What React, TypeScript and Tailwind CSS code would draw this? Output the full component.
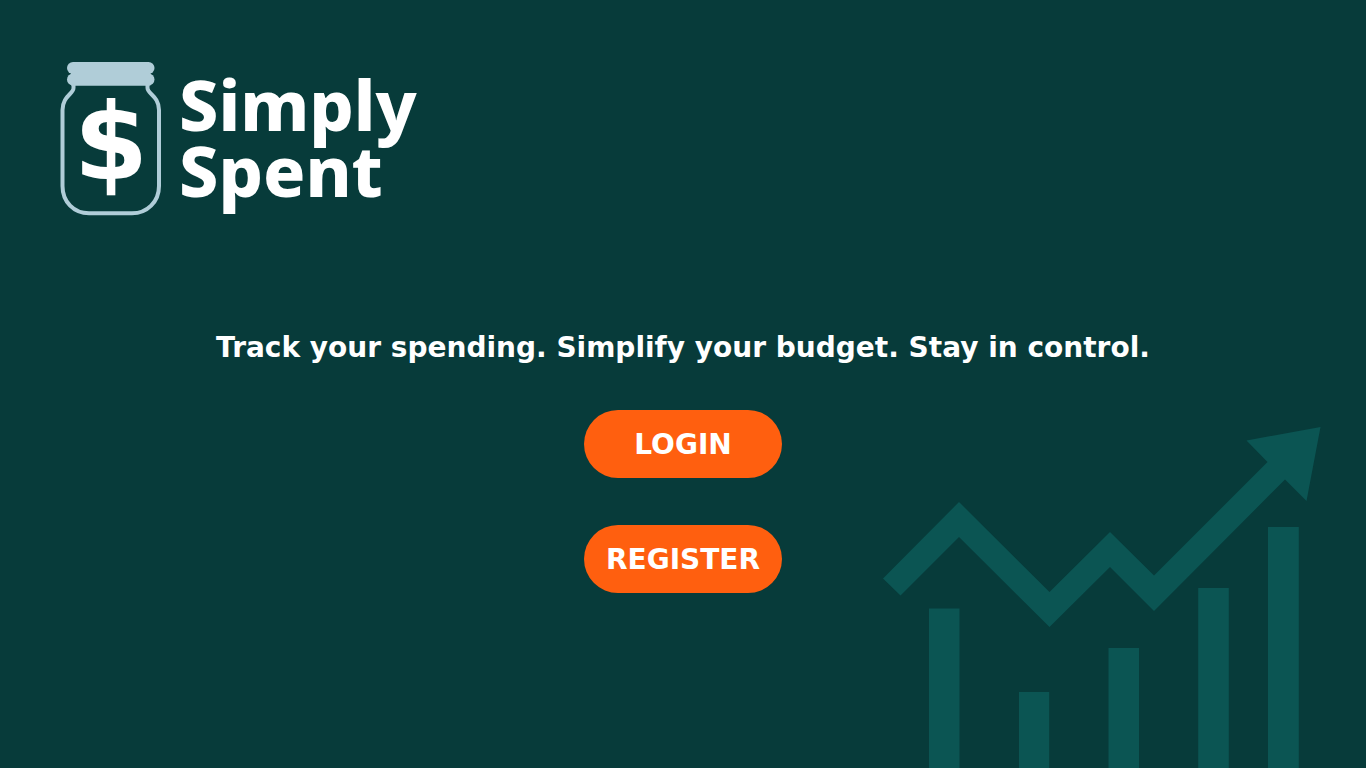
function JarLogo() {
  return (
    <svg viewBox="0 0 104 156" className="h-[156px] w-[104px] shrink-0" aria-hidden="true">
      <path
        d="M14.500 23V27C14.500 33 3.500 35 3.500 49V125C3.500 141 15 152.300 30 152.300H73C88 152.300 100 141 100 125V49C100 35 88.500 33 88.500 27V23"
        fill="none"
        stroke="#b0cdd8"
        strokeWidth="4"
      />
      <g fill="#b0cdd8">
        <rect x="8" y="1" width="87.500" height="12" rx="6" />
        <rect x="8" y="12.500" width="87.500" height="12" rx="6" />
        <rect x="12" y="8" width="79.500" height="9" />
        <rect x="12" y="18" width="79.500" height="6.500" />
      </g>
      <text
        x="52"
        y="118"
        textAnchor="middle"
        fontSize="107"
        className="fill-white font-['DejaVu_Sans',sans-serif] font-bold"
      >
        $
      </text>
    </svg>
  );
}

function GrowthChart() {
  return (
    <svg
      viewBox="0 0 484 342"
      className="pointer-events-none absolute right-0 bottom-0 h-[342px] w-[484px]"
      fill="#0b5553"
      aria-hidden="true"
    >
      <path d="M1 152.500 77 76 167.500 166 228 106 272 149.500 385.500 36 364.500 14.500 438.500 1 424.500 75 403 53.500 272 185 228 141 167.500 201 77 111 18.500 169.500Z" />
      <path d="M47 182.500h30.500V342H47zM137 266h30.200v76H137zM226.500 222h30.500v120h-30.500zM316.200 162h30.600v180h-30.600zM386 101h30.800v241H386z" />
    </svg>
  );
}

const buttonClass =
  'h-[68px] w-[198px] cursor-pointer rounded-full bg-[#ff5f0f] pt-0.5 text-[28px] leading-8 font-bold hover:bg-[#e9540a]';

export default function App() {
  return (
    <div className="relative flex min-h-screen flex-col overflow-hidden bg-[#073b3a] font-['DejaVu_Sans',sans-serif] text-white">
      <GrowthChart />
      <header className="flex gap-4 pt-[61px] pl-[59px]">
        <JarLogo />
        <h1 className="pt-2.5 font-['Noto_Sans',sans-serif] text-[70px] leading-[66px] font-extrabold">
          Simply
          <br />
          Spent
        </h1>
      </header>
      <main className="relative flex flex-col items-center px-6 pt-[115px] pb-12 text-center">
        <p className="text-[28px] leading-8 font-bold">
          Track your spending. Simplify your budget. Stay in control.
        </p>
        <div className="mt-[46px] flex flex-col gap-[47px]">
          <button type="button" className={buttonClass}>
            LOGIN
          </button>
          <button type="button" className={buttonClass}>
            REGISTER
          </button>
        </div>
      </main>
    </div>
  );
}
